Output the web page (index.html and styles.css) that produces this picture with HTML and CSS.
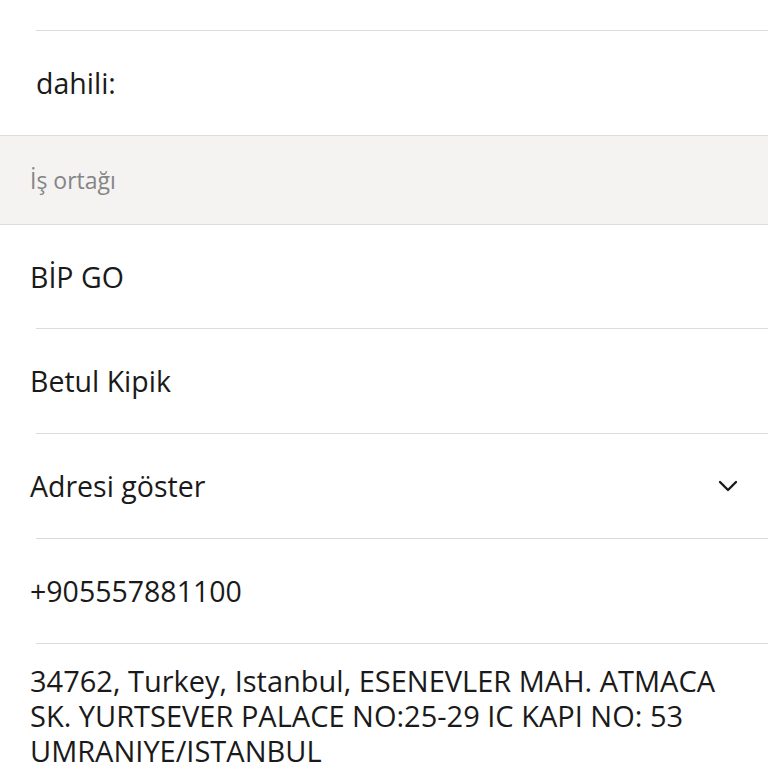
FILE: index.html
```html
<!DOCTYPE html>
<html>
<head>
<meta charset="utf-8">
<link rel="stylesheet" href="styles.css">
</head>
<body>
<div class="page">
  <div class="top-spacer"></div>
  <div class="row row-full-border">
    <span class="text">dahili:</span>
  </div>
  <div class="section-header">İş ortağı</div>
  <div class="row row-first">
    <span class="text">BİP GO</span>
  </div>
  <div class="row">
    <span class="text">Betul Kipik</span>
  </div>
  <div class="row row-expand">
    <span class="text">Adresi göster</span>
    <svg class="chevron" width="20" height="12" viewBox="0 0 20 12"><path d="M2 2 L10 10 L18 2" fill="none" stroke="#1a1a1a" stroke-width="2.4" stroke-linecap="round" stroke-linejoin="round"/></svg>
  </div>
  <div class="row">
    <span class="text">+905557881100</span>
  </div>
  <div class="address">34762, Turkey, Istanbul, ESENEVLER MAH. ATMACA SK. YURTSEVER PALACE NO:25-29 IC KAPI NO: 53 UMRANIYE/ISTANBUL</div>
</div>
</body>
</html>
```
FILE: styles.css
```css
html, body {
  margin: 0;
  padding: 0;
  background: #ffffff;
}
.page {
  width: 768px;
  height: 768px;
  overflow: hidden;
  font-family: "Open Sans", "Noto Sans", sans-serif;
  color: #1a1a1a;
}
.top-spacer {
  height: 30px;
  margin-left: 36px;
  border-bottom: 1px solid #dcdcdc;
}
.row {
  height: 105px;
  box-sizing: border-box;
  display: flex;
  align-items: center;
  margin-left: 36px;
  padding-right: 30px;
  border-bottom: 1px solid #dcdcdc;
}
.row-first {
  height: 104px;
}
.row .text {
  font-size: 28.5px;
  margin-left: -6px;
}
.row-full-border {
  margin-left: 0;
  padding-left: 36px;
}
.row-full-border .text {
  margin-left: 0;
}
.row-expand {
  justify-content: space-between;
}
.section-header {
  height: 89px;
  box-sizing: border-box;
  background: #f4f3f1;
  border-bottom: 1px solid #dcdcdc;
  padding-left: 30px;
  display: flex;
  align-items: center;
  font-size: 23px;
  color: #858585;
}
.address {
  padding: 19px 30px 0 30px;
  font-size: 29px;
  line-height: 35px;
}
```
